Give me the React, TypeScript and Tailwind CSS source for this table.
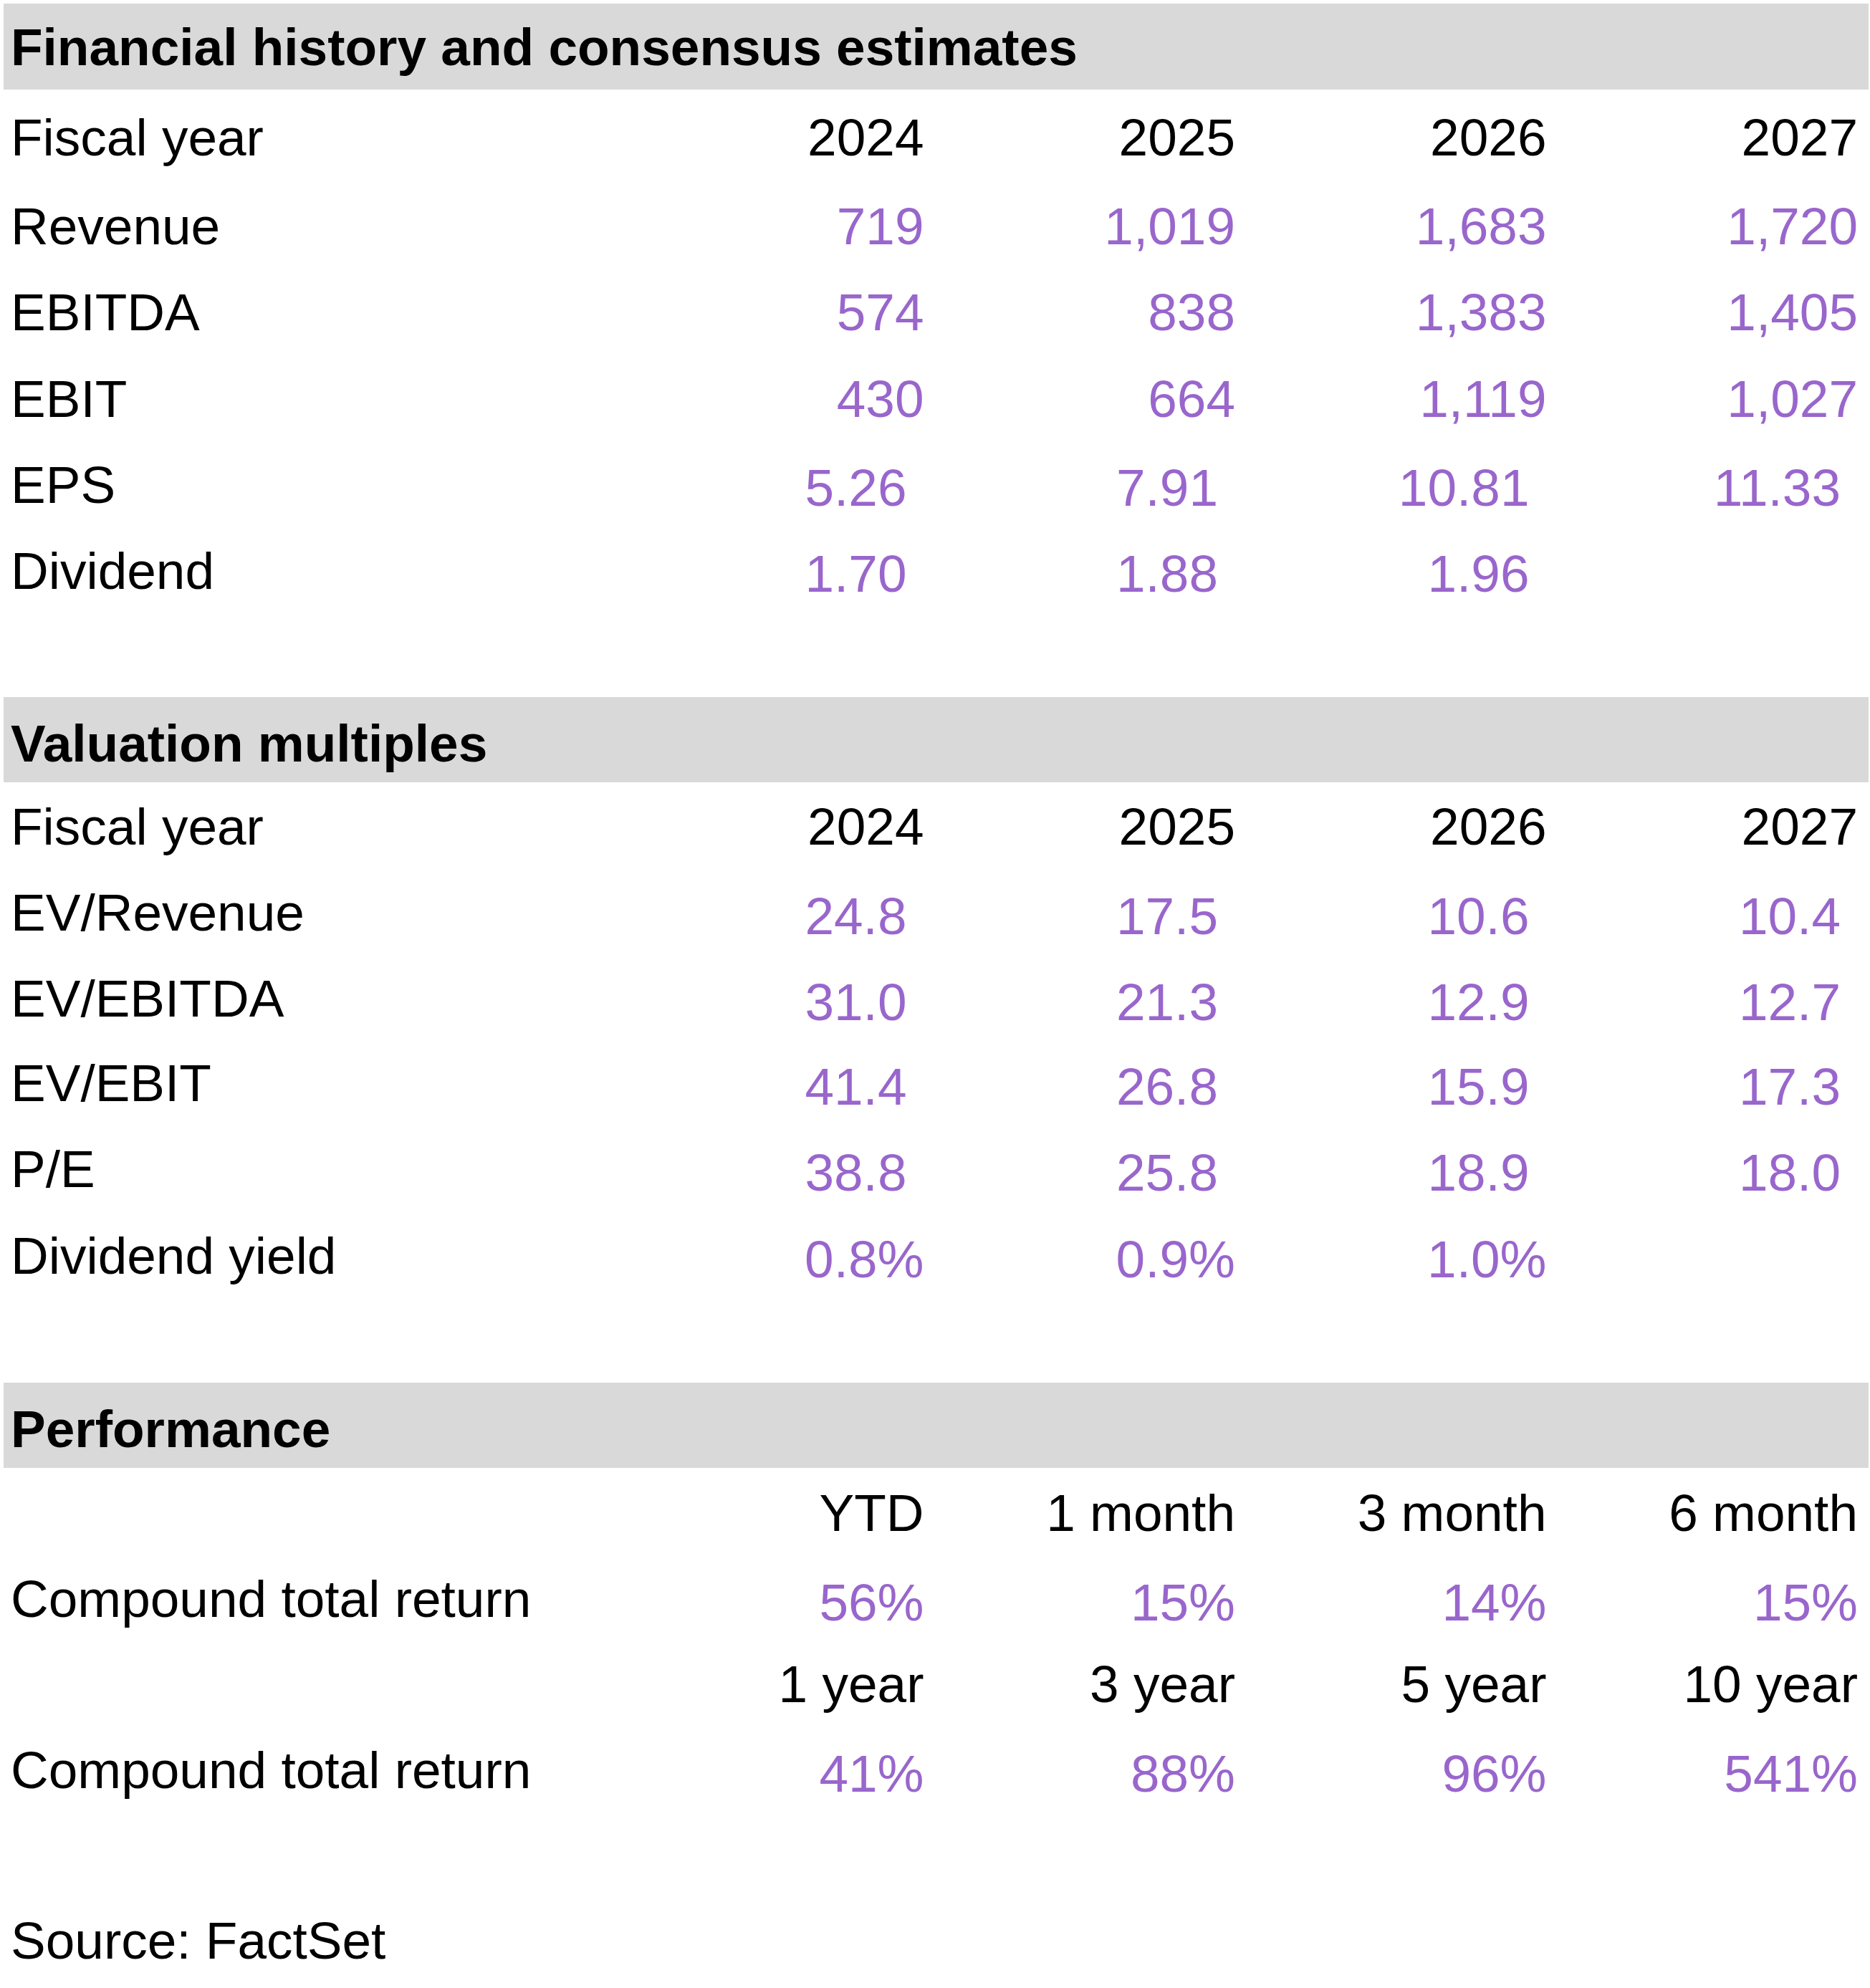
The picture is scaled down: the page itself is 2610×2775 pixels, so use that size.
import React from "react";

type Cell = { v: string; purple?: boolean; pad?: boolean };
type Row = { label: string; cells: Cell[]; h: string; lLead?: string };

const P = (v: string, pad = false): Cell => ({ v, purple: true, pad });
const B = (v: string): Cell => ({ v });

function Band({ title, h, lead }: { title: string; h: string; lead: string }) {
  return (
    <div className={`${h} bg-[#d9d9d9] pl-[10px] font-bold text-[73px] text-black ${lead} whitespace-nowrap`}>
      {title}
    </div>
  );
}

function DataRow({ row }: { row: Row }) {
  return (
    <div
      className={`grid grid-cols-[850px_434.5px_434.5px_434.5px_434.5px] ${row.h} text-[73px] leading-[121px] whitespace-nowrap`}
    >
      <div className={`pl-[10px] text-black ${row.lLead ?? ""}`}>{row.label}</div>
      {row.cells.map((c, i) => (
        <div
          key={i}
          className={`text-right ${c.purple ? "text-[#9966cc]" : "text-black"} ${c.pad ? "pr-[24px]" : ""}`}
        >
          {c.v}
        </div>
      ))}
    </div>
  );
}

const sec1: Row[] = [
  { label: "Fiscal year", h: "h-[124px]", cells: [B("2024"), B("2025"), B("2026"), B("2027")] },
  { label: "Revenue", h: "h-[120px]", cells: [P("719"), P("1,019"), P("1,683"), P("1,720")] },
  { label: "EBITDA", h: "h-[121px]", cells: [P("574"), P("838"), P("1,383"), P("1,405")] },
  { label: "EBIT", h: "h-[124px]", cells: [P("430"), P("664"), P("1,119"), P("1,027")] },
  {
    label: "EPS",
    h: "h-[120px]",
    lLead: "leading-[113px]",
    cells: [P("5.26", true), P("7.91", true), P("10.81", true), P("11.33", true)],
  },
  {
    label: "Dividend",
    h: "h-[120px]",
    lLead: "leading-[113px]",
    cells: [P("1.70", true), P("1.88", true), P("1.96", true), P("", true)],
  },
];

const sec2: Row[] = [
  { label: "Fiscal year", h: "h-[125px]", cells: [B("2024"), B("2025"), B("2026"), B("2027")] },
  {
    label: "EV/Revenue",
    h: "h-[120px]",
    lLead: "leading-[111px]",
    cells: [P("24.8", true), P("17.5", true), P("10.6", true), P("10.4", true)],
  },
  {
    label: "EV/EBITDA",
    h: "h-[118px]",
    lLead: "leading-[111px]",
    cells: [P("31.0", true), P("21.3", true), P("12.9", true), P("12.7", true)],
  },
  {
    label: "EV/EBIT",
    h: "h-[120px]",
    lLead: "leading-[111px]",
    cells: [P("41.4", true), P("26.8", true), P("15.9", true), P("17.3", true)],
  },
  {
    label: "P/E",
    h: "h-[121px]",
    lLead: "leading-[111px]",
    cells: [P("38.8", true), P("25.8", true), P("18.9", true), P("18.0", true)],
  },
  {
    label: "Dividend yield",
    h: "h-[120px]",
    lLead: "leading-[111px]",
    cells: [P("0.8%"), P("0.9%"), P("1.0%"), P("")],
  },
];

const sec3: Row[] = [
  { label: "", h: "h-[125px]", cells: [B("YTD"), B("1 month"), B("3 month"), B("6 month")] },
  {
    label: "Compound total return",
    h: "h-[114px]",
    lLead: "leading-[112px]",
    cells: [P("56%"), P("15%"), P("14%"), P("15%")],
  },
  { label: "", h: "h-[125px]", cells: [B("1 year"), B("3 year"), B("5 year"), B("10 year")] },
  {
    label: "Compound total return",
    h: "h-[120px]",
    lLead: "leading-[112px]",
    cells: [P("41%"), P("88%"), P("96%"), P("541%")],
  },
];

export default function App() {
  return (
    <div className="w-[2610px] h-[2775px] bg-white overflow-hidden font-['Liberation_Sans',Arial,sans-serif] text-black">
      <div className="ml-[5px] mt-[5px] w-[2603px] flex flex-col">
        <Band title="Financial history and consensus estimates" h="h-[120px]" lead="leading-[121px]" />
        <div className="mt-[6px]">
          {sec1.map((r, i) => (
            <DataRow key={i} row={r} />
          ))}
        </div>
        <div className="h-[113px]" />
        <Band title="Valuation multiples" h="h-[119px]" lead="leading-[129px]" />
        <div className="mt-[1px]">
          {sec2.map((r, i) => (
            <DataRow key={i} row={r} />
          ))}
        </div>
        <div className="h-[113px]" />
        <Band title="Performance" h="h-[119px]" lead="leading-[129px]" />
        <div className="mt-[2px]">
          {sec3.map((r, i) => (
            <DataRow key={i} row={r} />
          ))}
        </div>
        <div className="h-[113px]" />
        <div className="h-[121px] pl-[10px] text-[73px] leading-[121px] whitespace-nowrap">Source: FactSet</div>
      </div>
    </div>
  );
}
